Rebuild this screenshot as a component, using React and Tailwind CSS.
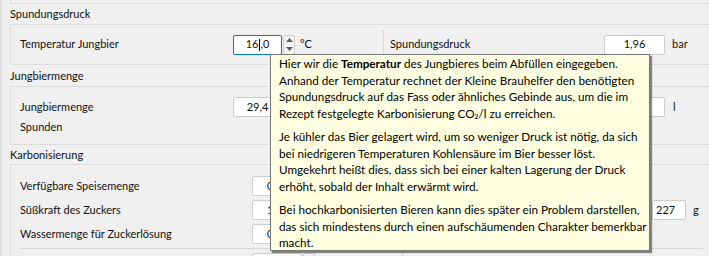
import React from 'react'

// Feld mit Wert (QLineEdit / QDoubleSpinBox ohne Buttons)
const Field = ({ value, className = 'w-[61px] justify-center' }) => (
  <div className={`flex h-[20px] shrink-0 items-center rounded-[2px] border border-[#cdcdcd] bg-white ${className}`}>
    {value}
  </div>
)

// Spin-Buttons rechts neben einer Box
const SpinButtons = () => (
  <div className="ml-[1px] flex h-[20px] w-[12px] shrink-0 flex-col rounded-[2px] border border-[#cdcdcd] bg-[#f3f3f3]">
    <div className="flex flex-1 items-center justify-center">
      <svg width="7" height="4" viewBox="0 0 7 4"><path d="M0 4 L3.5 0 L7 4 Z" fill="#5a5a5a" /></svg>
    </div>
    <div className="flex flex-1 items-center justify-center">
      <svg width="7" height="4" viewBox="0 0 7 4"><path d="M0 0 L3.5 4 L7 0 Z" fill="#5a5a5a" /></svg>
    </div>
  </div>
)

const GroupTitle = ({ children, className }) => (
  <div className={`flex shrink-0 items-center pt-[1px] ${className}`}>{children}</div>
)

const Line = ({ children }) => <div className="whitespace-nowrap">{children}</div>

const Tooltip = () => (
  <div className="absolute left-[270px] top-[54px] flex h-[197px] w-[380px] flex-col gap-[7px] border border-[#767676] bg-[#ffffe1] pl-[8px] text-[11.7px] leading-[16.5px] text-black shadow-[2px_2px_1px_rgba(0,0,0,0.45)] font-['Lato','Noto_Sans',sans-serif]">
    <div>
      <Line>Hier wir die <b>Temperatur</b> des Jungbieres beim Abfüllen eingegeben.</Line>
      <Line>Anhand der Temperatur rechnet der Kleine Brauhelfer den benötigten</Line>
      <Line>Spundungsdruck auf das Fass oder ähnliches Gebinde aus, um die im</Line>
      <Line>Rezept festgelegte Karbonisierung CO₂/l zu erreichen.</Line>
    </div>
    <div>
      <Line>Je kühler das Bier gelagert wird, um so weniger Druck ist nötig, da sich</Line>
      <Line>bei niedrigeren Temperaturen Kohlensäure im Bier besser löst.</Line>
      <Line>Umgekehrt heißt dies, dass sich bei einer kalten Lagerung der Druck</Line>
      <Line>erhöht, sobald der Inhalt erwärmt wird.</Line>
    </div>
    <div>
      <Line>Bei hochkarbonisierten Bieren kann dies später ein Problem darstellen,</Line>
      <Line>das sich mindestens durch einen aufschäumenden Charakter bemerkbar</Line>
      <Line>macht.</Line>
    </div>
  </div>
)

export default function App() {
  return (
    <div className="relative flex h-[256px] w-[709px] overflow-hidden bg-[#f0f0f0] text-[11px] text-[#111] font-['Lato','Noto_Sans',sans-serif]">
      <div className="w-[2px] shrink-0 bg-[#e1e1e1]" />
      <div className="ml-[8px] flex w-[740px] shrink-0 flex-col">
        {/* Ende der vorherigen Gruppe */}
        <div className="h-[4px] shrink-0 border-b border-l border-[#dcdcdc]" />

        <GroupTitle className="h-[20px]">Spundungsdruck</GroupTitle>
        <div className="flex h-[41px] shrink-0 border border-[#dcdcdc]">
          <div className="flex w-[372px] shrink-0 items-center pl-[9px]">
            <div className="w-[213px] shrink-0">Temperatur Jungbier</div>
            <div className="flex h-[20px] w-[49px] shrink-0 items-center justify-center rounded-[2px] border border-[#0078d7] bg-white">
              16<span className="mx-[0.5px] inline-block h-[12px] w-px bg-black" />,0
            </div>
            <SpinButtons />
            <div className="ml-[5px]">°C</div>
          </div>
          <div className="my-[5px] w-px shrink-0 bg-[#d8d8d8]" />
          <div className="flex items-center pl-[6px]">
            <div className="w-[214px] shrink-0">Spundungsdruck</div>
            <Field value="1,96" />
            <div className="ml-[7px]">bar</div>
          </div>
        </div>

        <GroupTitle className="h-[21px]">Jungbiermenge</GroupTitle>
        <div className="flex h-[59px] shrink-0 border border-[#dcdcdc]">
          <div className="flex w-[372px] shrink-0 flex-col pl-[9px] pt-[10px]">
            <div className="flex h-[20px] items-center">
              <div className="w-[213px] shrink-0">Jungbiermenge</div>
              <Field value="29,4" className="w-[49px] justify-center" />
            </div>
            <div className="flex h-[20px] items-center">Spunden</div>
          </div>
          <div className="my-[5px] w-px shrink-0 bg-[#d8d8d8]" />
          <div className="flex flex-col pl-[6px] pt-[10px]">
            <div className="flex h-[20px] items-center">
              <div className="w-[214px] shrink-0" />
              <Field value="" />
              <div className="ml-[8px]">l</div>
            </div>
          </div>
        </div>

        <GroupTitle className="h-[19px]">Karbonisierung</GroupTitle>
        <div className="flex flex-1 border-x border-t border-[#dcdcdc]">
          <div className="flex w-[391px] shrink-0 flex-col gap-[4px] pl-[9px] pt-[11px]">
            <div className="flex h-[20px] items-center">
              <div className="w-[232px] shrink-0">Verfügbare Speisemenge</div>
              <Field value="0,00" className="w-[50px] justify-start pl-[14px]" />
            </div>
            <div className="flex h-[20px] items-center">
              <div className="w-[232px] shrink-0">Süßkraft des Zuckers</div>
              <Field value="1,00" className="w-[50px] justify-start pl-[14px]" />
            </div>
            <div className="flex h-[20px] items-center">
              <div className="w-[232px] shrink-0">Wassermenge für Zuckerlösung</div>
              <Field value="0,00" className="w-[50px] justify-start pl-[14px]" />
            </div>
            <div className="h-px w-[370px] shrink-0 bg-[#d8d8d8]" />
            <div className="flex h-[20px] items-center">
              <div className="w-[232px] shrink-0" />
              <Field value="" className="w-[50px] justify-center" />
              <SpinButtons />
            </div>
          </div>
          <div className="mt-[6px] w-px shrink-0 bg-[#d8d8d8]" />
          <div className="flex flex-col gap-[4px] pl-[7px] pt-[11px]">
            <div className="h-[20px]" />
            <div className="flex h-[20px] items-center">
              <div className="w-[242px] shrink-0" />
              <Field value="227" className="w-[34px] justify-start pl-[3px]" />
              <div className="ml-[7px]">g</div>
            </div>
            <div className="h-[20px]" />
            <div className="h-px w-[293px] shrink-0 bg-[#d8d8d8]" />
          </div>
        </div>
      </div>

      <Tooltip />
    </div>
  )
}
